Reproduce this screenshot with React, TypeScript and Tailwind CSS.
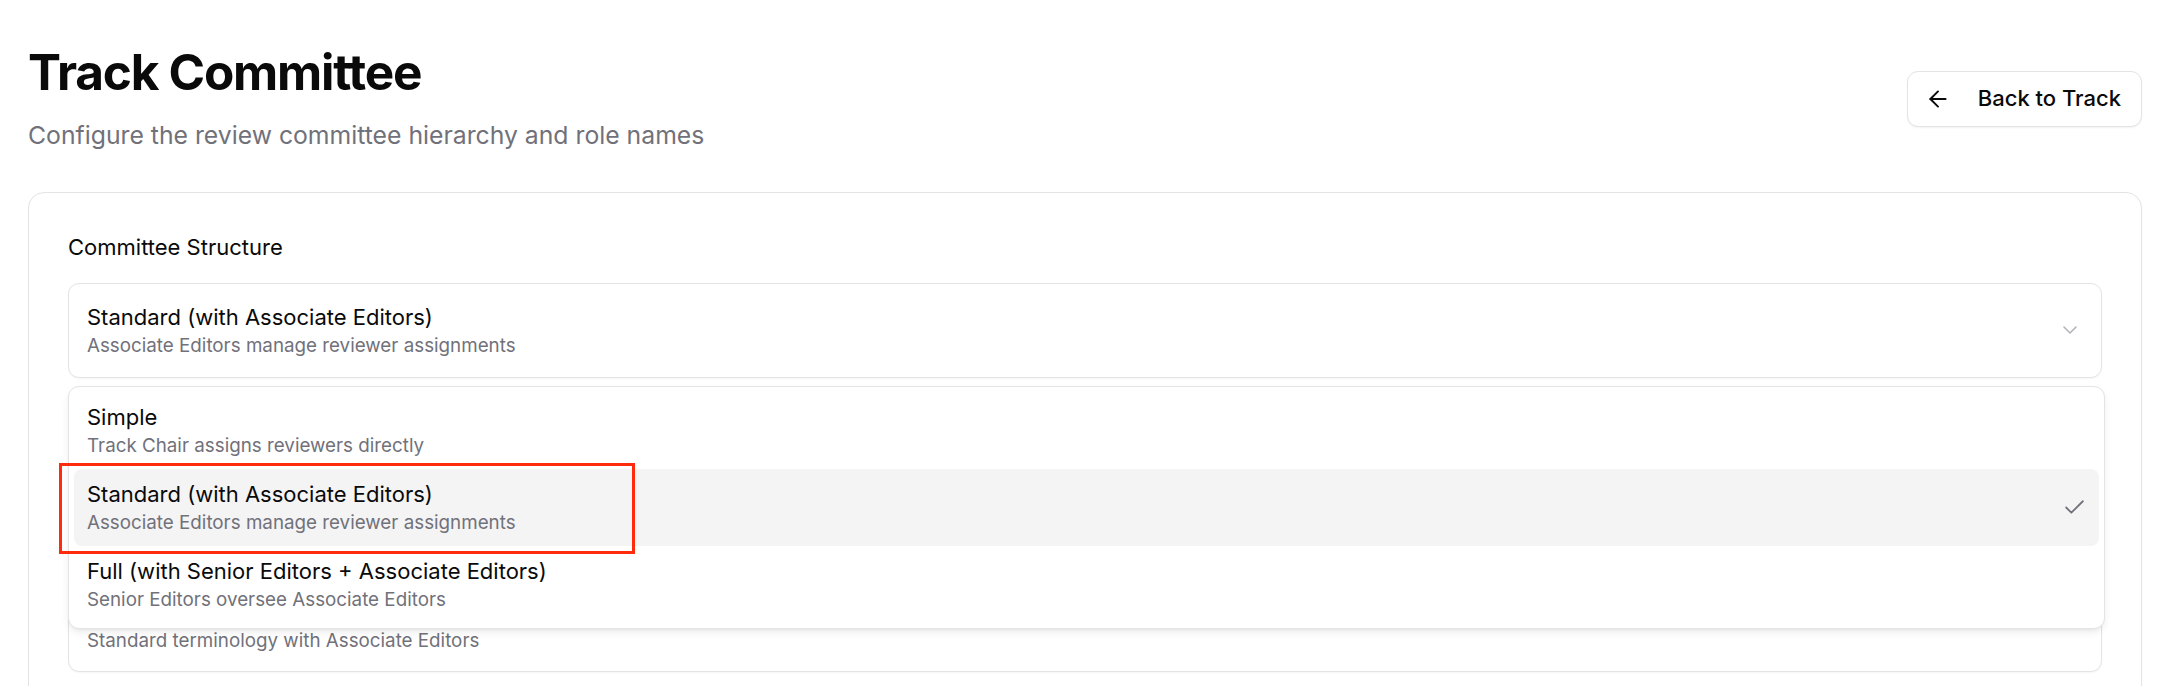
import { ArrowLeft, Check, ChevronDown } from "lucide-react"

interface StructureOption {
  id: string
  label: string
  description: string
}

const structureOptions: StructureOption[] = [
  { id: "simple", label: "Simple", description: "Track Chair assigns reviewers directly" },
  {
    id: "standard",
    label: "Standard (with Associate Editors)",
    description: "Associate Editors manage reviewer assignments",
  },
  {
    id: "full",
    label: "Full (with Senior Editors + Associate Editors)",
    description: "Senior Editors oversee Associate Editors",
  },
]

function OptionText({ label, description }: { label: string; description: string }) {
  return (
    <div className="flex min-w-0 flex-col">
      <span className="truncate text-[22px] leading-[30px] text-[#0a0a0a]">{label}</span>
      <span className="mt-[2px] truncate text-[18.8px] leading-[24px] text-[#71717a]">{description}</span>
    </div>
  )
}

function SelectTrigger({ label, description }: { label: string; description: string }) {
  return (
    <button
      type="button"
      className="flex h-[95px] w-full items-center justify-between rounded-[11px] border border-[#e4e4e7] bg-white pl-[18px] pr-[19px] text-left shadow-[0_1px_2px_rgba(0,0,0,0.04)]"
    >
      <OptionText label={label} description={description} />
      <ChevronDown size={24} strokeWidth={1.6} className="shrink-0 text-[#b4b4b8]" />
    </button>
  )
}

export default function App() {
  const selectedId = "standard"
  const selected = structureOptions.find((o) => o.id === selectedId)!

  return (
    <div className="relative min-h-screen bg-white px-[28px] pt-[45px] font-['Inter',sans-serif]">
      <header className="flex items-center justify-between">
        <div>
          <h1 className="text-[49.5px] font-bold leading-[55px] tracking-[-0.025em] text-[#0a0a0a]">
            Track Committee
          </h1>
          <p className="mt-[19px] text-[24.75px] leading-[33px] text-[#71717a]">
            Configure the review committee hierarchy and role names
          </p>
        </div>
        <button
          type="button"
          className="flex h-[56px] items-center gap-[27px] rounded-[11px] border border-[#e4e4e7] bg-white pl-[17px] pr-[20px] text-[22px] font-medium text-[#0a0a0a] shadow-[0_1px_2px_rgba(0,0,0,0.05)]"
        >
          <ArrowLeft size={26} strokeWidth={1.8} />
          Back to Track
        </button>
      </header>

      <section className="mt-[40px] rounded-[16px] border border-[#e4e4e7] bg-white px-[39px] pb-[40px] pt-[41px] shadow-[0_1px_2px_rgba(0,0,0,0.04)]">
        <label className="block text-[22px] leading-[27.5px] text-[#0a0a0a]">Committee Structure</label>

        <div className="relative mt-[21px]">
          <SelectTrigger label={selected.label} description={selected.description} />

          <div className="absolute left-0 right-[-3px] top-[calc(100%+8px)] z-10 rounded-[11px] border border-[#e4e4e7] bg-white p-[5px] shadow-[0_4px_10px_-2px_rgba(0,0,0,0.1),0_2px_4px_-2px_rgba(0,0,0,0.06)]">
            {structureOptions.map((option) => {
              const isSelected = option.id === selectedId
              return (
                <div
                  key={option.id}
                  className={`flex h-[77px] items-center justify-between rounded-[8px] pl-[13px] pr-[12px] ${
                    isSelected ? "bg-[#f4f4f5]" : ""
                  }`}
                >
                  <OptionText label={option.label} description={option.description} />
                  {isSelected && <Check size={25} strokeWidth={1.7} className="shrink-0 text-[#71717a]" />}
                </div>
              )
            })}
          </div>
        </div>

        <p className="mt-[11px] text-[19.25px] leading-[27.5px] text-[#71717a]">
          Choose how reviewer assignments flow through the committee
        </p>

        <hr className="mt-[38px] border-[#e4e4e7]" />

        <label className="mt-[38px] block text-[22px] leading-[27.5px] text-[#0a0a0a]">Role Names</label>
        <p className="mt-[5px] text-[19.25px] leading-[27.5px] text-[#71717a]">
          Pick a terminology preset for committee roles
        </p>

        <div className="mt-[24px]">
          <SelectTrigger label="Standard" description="Standard terminology with Associate Editors" />
        </div>
      </section>

      {/* annotation box over the selected option */}
      <div className="pointer-events-none absolute left-[59px] top-[463px] z-20 h-[91px] w-[576px] border-[3px] border-[#fe2c0c]" />
    </div>
  )
}
